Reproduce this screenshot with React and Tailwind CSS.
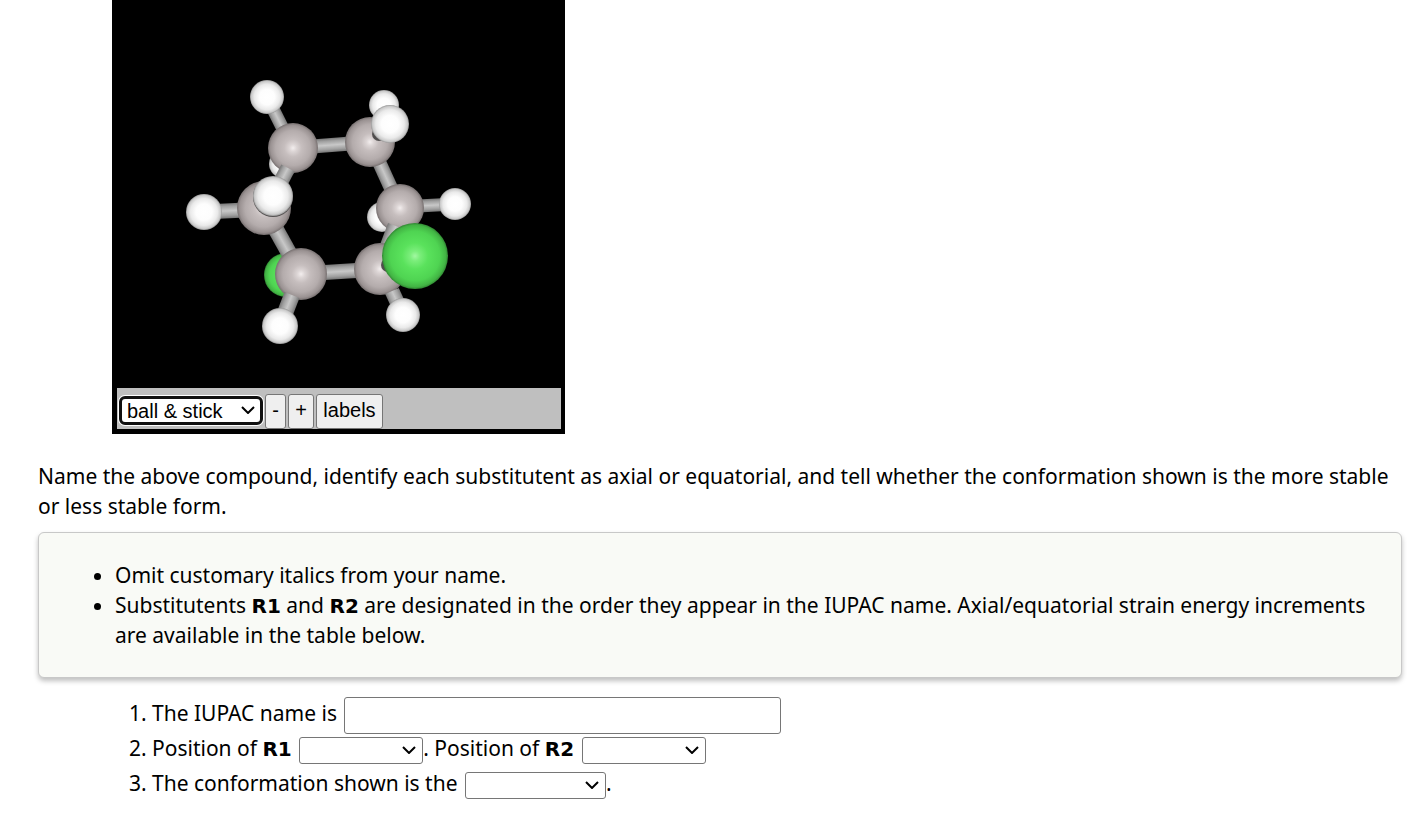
// Drawn from back to front
const molecule = [
  { bond: [293, 148, 370, 142], width: 14 },
  { bond: [400, 207, 455, 204], width: 13 },
  { bond: [301, 274, 380, 269], width: 15 },
  { atom: 'H', x: 384, y: 105, r: 15 },
  { atom: 'H', x: 283, y: 164, r: 14 },
  { atom: 'H', x: 382, y: 217, r: 15 },
  { atom: 'Cl', x: 286, y: 275, r: 22 },
  { bond: [370, 142, 400, 208], width: 14 },
  { bond: [267, 97, 293, 149], width: 13 },
  { atom: 'H', x: 267, y: 97, r: 17 },
  { atom: 'C', x: 293, y: 148, r: 25 },
  { atom: 'C', x: 370, y: 142, r: 25 },
  { atom: 'C', x: 400, y: 208, r: 24 },
  { atom: 'H', x: 455, y: 204, r: 16 },
  { bond: [396, 226, 380, 269], width: 17 },
  { bond: [288, 168, 264, 214], width: 15 },
  { bond: [204, 212, 264, 209], width: 15 },
  { bond: [264, 208, 294, 262], width: 16 },
  { atom: 'C', x: 264, y: 208, r: 27 },
  { atom: 'H', x: 204, y: 212, r: 18 },
  { atom: 'shadow', x: 273, y: 197, r: 20 },
  { atom: 'H', x: 273, y: 196, r: 20 },
  { atom: 'C', x: 301, y: 274, r: 26 },
  { bond: [292, 295, 280, 326], width: 16 },
  { atom: 'H', x: 280, y: 326, r: 18 },
  { atom: 'C', x: 380, y: 269, r: 26 },
  { bond: [392, 291, 403, 315], width: 15 },
  { atom: 'H', x: 403, y: 315, r: 17 },
  { atom: 'shadow', x: 388, y: 265, r: 7 },
  { atom: 'Cl', x: 415, y: 256, r: 33 },
  { atom: 'shadow', x: 379, y: 134, r: 7 },
  { atom: 'H', x: 390, y: 124, r: 19 },
];

const Bond = ({ id, points, width }) => {
  const [x1, y1, x2, y2] = points;
  const length = Math.hypot(x2 - x1, y2 - y1);
  const nx = ((y2 - y1) / length) * (width / 2);
  const ny = (-(x2 - x1) / length) * (width / 2);

  return (
    <>
      <linearGradient
        id={id}
        gradientUnits="userSpaceOnUse"
        x1={x1 - nx}
        y1={y1 - ny}
        x2={x1 + nx}
        y2={y1 + ny}
      >
        <stop offset="0" stopColor="#767676" />
        <stop offset="0.2" stopColor="#a0a0a0" />
        <stop offset="0.5" stopColor="#c8c8c8" />
        <stop offset="0.8" stopColor="#a0a0a0" />
        <stop offset="1" stopColor="#767676" />
      </linearGradient>
      <polygon
        points={`${x1 - nx},${y1 - ny} ${x1 + nx},${y1 + ny} ${x2 + nx},${y2 + ny} ${x2 - nx},${y2 - ny}`}
        fill={`url(#${id})`}
      />
    </>
  );
};

const Molecule = () => (
  <svg
    viewBox="112 0 453 388"
    className="block h-[388px] w-full"
    role="img"
    aria-label="Ball and stick model"
  >
    <defs>
      <radialGradient id="atom-C">
        <stop offset="0" stopColor="#f3eeee" />
        <stop offset="0.15" stopColor="#dcd5d5" />
        <stop offset="0.35" stopColor="#c6bebe" />
        <stop offset="0.7" stopColor="#b4acac" />
        <stop offset="0.9" stopColor="#9a9292" />
        <stop offset="1" stopColor="#766f6f" />
      </radialGradient>
      <radialGradient id="atom-H">
        <stop offset="0" stopColor="#ffffff" />
        <stop offset="0.45" stopColor="#fdfdfd" />
        <stop offset="0.75" stopColor="#eaeaea" />
        <stop offset="0.92" stopColor="#cacaca" />
        <stop offset="1" stopColor="#969696" />
      </radialGradient>
      <radialGradient id="atom-Cl">
        <stop offset="0" stopColor="#a2f8a2" />
        <stop offset="0.15" stopColor="#7bee7b" />
        <stop offset="0.4" stopColor="#5ae25c" />
        <stop offset="0.75" stopColor="#4fd452" />
        <stop offset="0.93" stopColor="#42b444" />
        <stop offset="1" stopColor="#308632" />
      </radialGradient>
      <radialGradient id="atom-shadow">
        <stop offset="0" stopColor="#3a3838" />
        <stop offset="1" stopColor="#555252" />
      </radialGradient>
    </defs>
    {molecule.map((part, index) =>
      part.bond ? (
        <Bond key={index} id={`bond-${index}`} points={part.bond} width={part.width} />
      ) : (
        <circle key={index} cx={part.x} cy={part.y} r={part.r} fill={`url(#atom-${part.atom})`} />
      )
    )}
  </svg>
);

const Chevron = ({ className }) => (
  <svg
    viewBox="0 0 14 8"
    fill="none"
    stroke="currentColor"
    strokeWidth="2"
    className={`pointer-events-none absolute h-2 w-3.5 ${className}`}
  >
    <path d="M1 1l6 6 6-6" />
  </svg>
);

const Substituent = ({ children }) => (
  <b className="font-['DejaVu_Sans',Verdana,sans-serif] text-xl leading-none">{children}</b>
);

const Select = ({ id, className, options }) => (
  <span className="relative ml-0.5 inline-block align-middle">
    <select
      id={id}
      className={`block h-[27px] appearance-none rounded-[3px] border border-[#767676] bg-white px-1 text-base ${className}`}
    >
      <option value=""></option>
      {options.map((option) => (
        <option key={option}>{option}</option>
      ))}
    </select>
    <Chevron className="top-[9px] right-[7px]" />
  </span>
);

const Viewer = () => (
  <div className="ml-[74px] w-[453px] bg-black pb-[5px]">
    <Molecule />
    <div className="mr-1 ml-[5px] flex h-[41px] items-start gap-0.5 bg-[#bfbfbf] pt-1.5 pl-0.5 font-['Liberation_Sans',Arial,sans-serif] text-xl">
      <span className="relative mt-0.5">
        <select
          aria-label="Display style"
          className="block h-[29px] w-[144px] appearance-none rounded-md border-3 border-[#101010] bg-white pl-[5px] leading-5 ring-1 ring-white"
        >
          <option>ball &amp; stick</option>
          <option>wireframe</option>
          <option>spacefill</option>
        </select>
        <Chevron className="top-2.5 right-2" />
      </span>
      <button className="h-[35px] w-[21px] rounded-[3px] border border-[#767676] bg-[#efefef] pb-1">
        -
      </button>
      <button className="h-[35px] w-[26px] rounded-[3px] border border-[#767676] bg-[#efefef] pb-1">
        +
      </button>
      <button className="h-[35px] w-[67px] rounded-[3px] border border-[#767676] bg-[#efefef] pb-1">
        labels
      </button>
    </div>
  </div>
);

export default function App() {
  return (
    <main className="bg-white pr-5 pb-4 pl-[38px] font-['Noto_Sans',Verdana,sans-serif] text-[21px] leading-[30px] text-black">
      <Viewer />

      <p className="mt-[27px]">
        Name the above compound, identify each substitutent as axial or equatorial, and tell
        whether the conformation shown is the more stable or less stable form.
      </p>

      {/* Hints */}
      <div className="mt-[11px] rounded-md border border-[#c8c8c8] bg-[#f9faf6] py-[27px] pr-6 pl-[76px] shadow-[0_3px_5px_rgba(0,0,0,0.25)]">
        <ul className="list-disc">
          <li>Omit customary italics from your name.</li>
          <li>
            Substitutents <Substituent>R1</Substituent> and <Substituent>R2</Substituent> are
            designated in the order they appear in the IUPAC name. Axial/equatorial strain energy
            increments are available in the table below.
          </li>
        </ul>
      </div>

      {/* Answers */}
      <ol className="mt-[18px] list-decimal pl-[114px]">
        <li className="h-[35px] leading-[35px]">
          <label htmlFor="iupac-name">The IUPAC name is</label>{' '}
          <input
            id="iupac-name"
            type="text"
            className="ml-0.5 h-[37px] w-[437px] rounded-[3px] border border-[#767676] bg-white px-1 align-middle"
          />
        </li>
        <li className="h-[35px] leading-[35px]">
          <label htmlFor="position-r1">
            Position of <Substituent>R1</Substituent>
          </label>{' '}
          <Select id="position-r1" className="w-[124px]" options={['axial', 'equatorial']} />.{' '}
          <label htmlFor="position-r2">
            Position of <Substituent>R2</Substituent>
          </label>{' '}
          <Select id="position-r2" className="w-[124px]" options={['axial', 'equatorial']} />
        </li>
        <li className="h-[35px] leading-[35px]">
          <label htmlFor="stability">The conformation shown is the</label>{' '}
          <Select id="stability" className="w-[141px]" options={['more stable', 'less stable']} />.
        </li>
      </ol>
    </main>
  );
}
